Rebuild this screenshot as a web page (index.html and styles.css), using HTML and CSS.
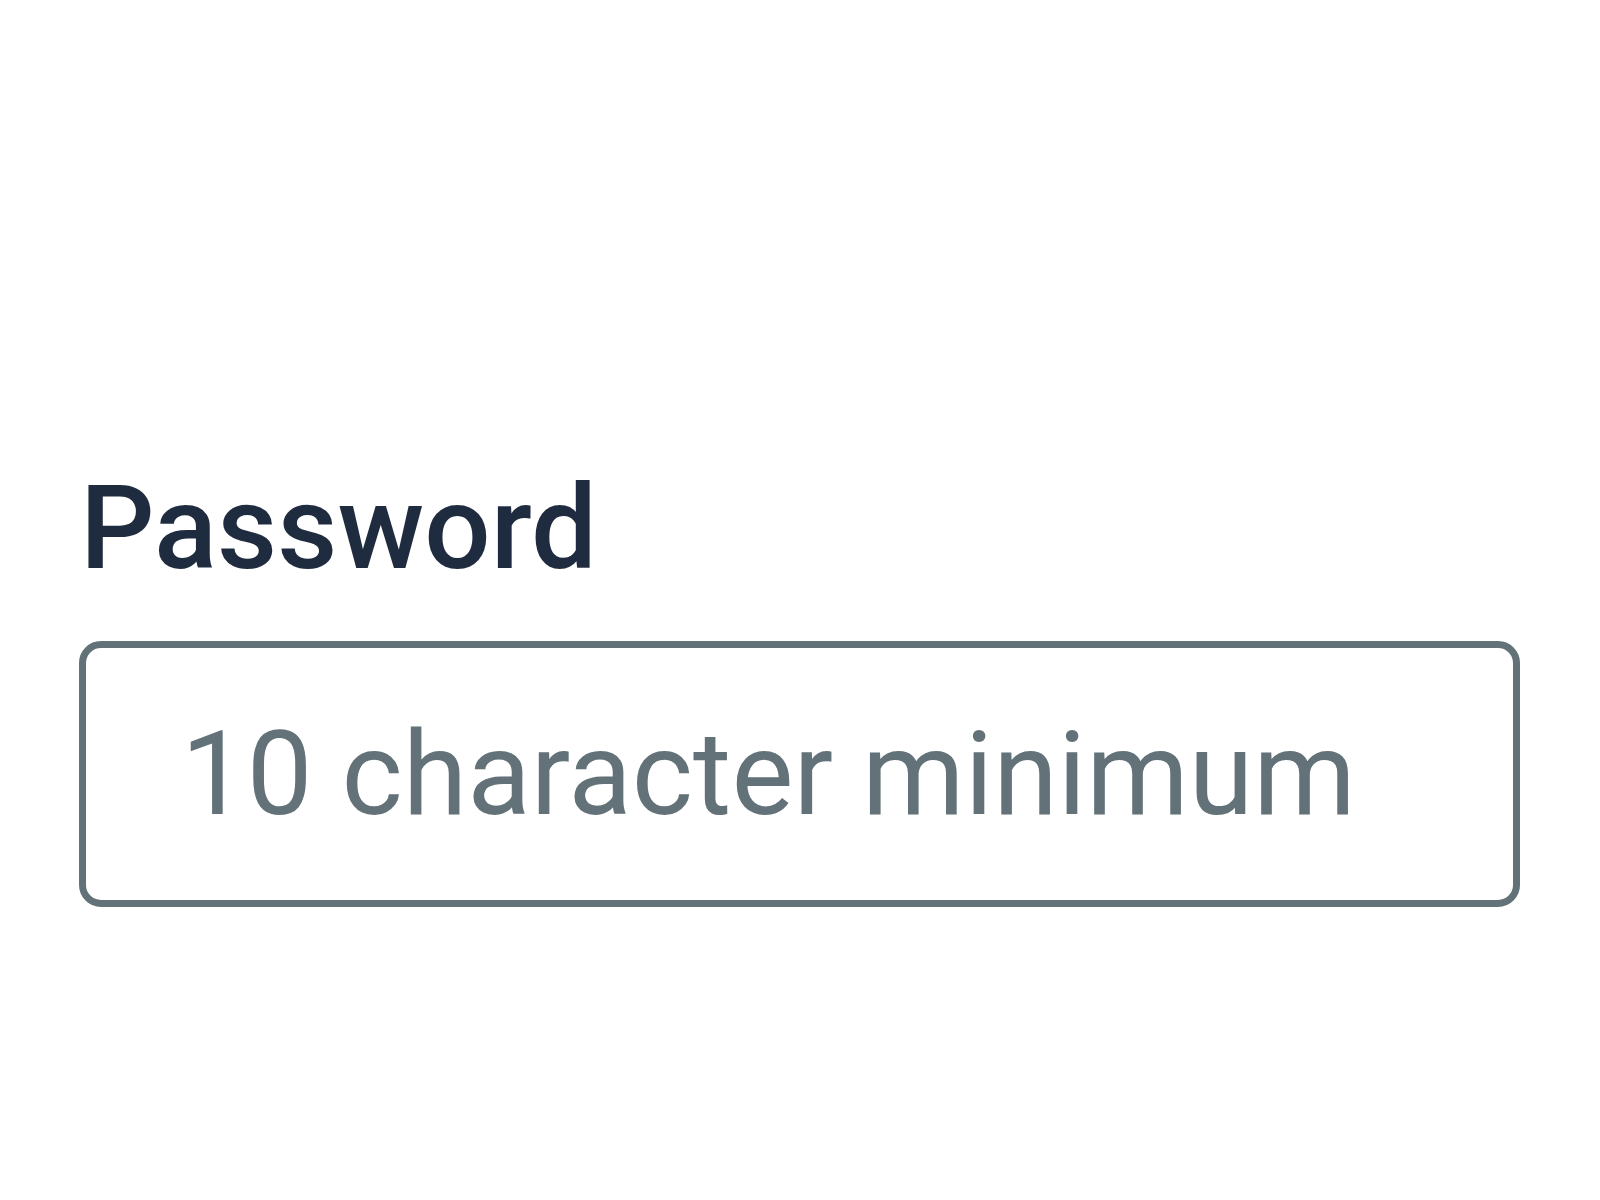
FILE: index.html
```html
<!DOCTYPE html>
<html lang="en">
<head>
<meta charset="utf-8">
<title>Password</title>
<link rel="stylesheet" href="styles.css">
</head>
<body>
<main class="page">
  <div class="field">
    <label class="field-label" for="pw">Password</label>
    <input class="field-input" id="pw" type="password" placeholder="10 character minimum">
  </div>
</main>
</body>
</html>
```

FILE: styles.css
```css
html, body {
  margin: 0;
  padding: 0;
  background: #ffffff;
}

.page {
  width: 1600px;
  height: 1200px;
  box-sizing: border-box;
  padding: 460px 80px 0 79px;
  font-family: Roboto, "Noto Sans", sans-serif;
}

.field {
  display: flex;
  flex-direction: column;
}

.field-label {
  font-family: Roboto, sans-serif;
  font-size: 117px;
  font-weight: 500;
  line-height: 137px;
  color: #1f2b3e;
  padding-left: 1px;
  margin-bottom: 44px;
}

.field-input {
  box-sizing: border-box;
  width: 100%;
  height: 266px;
  margin: 0;
  border: 7px solid #637278;
  border-radius: 22px;
  padding: 0 0 0 95px;
  font-family: Roboto, sans-serif;
  font-size: 117px;
  font-weight: 400;
  color: #1f2b3e;
  background: #ffffff;
  outline: none;
}

.field-input::placeholder {
  color: #637278;
  opacity: 1;
}
```
